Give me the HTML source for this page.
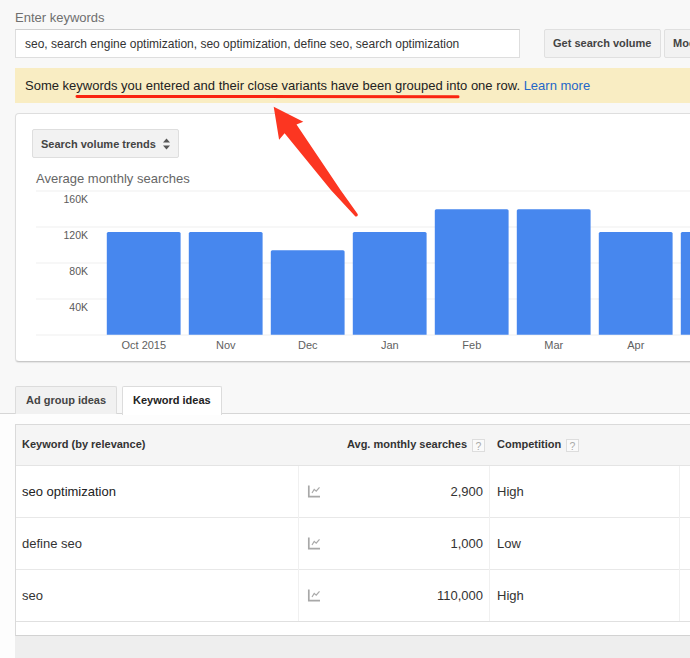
<!DOCTYPE html>
<html><head><meta charset="utf-8">
<style>
html,body{margin:0;padding:0;}
body{width:690px;height:658px;overflow:hidden;position:relative;background:#f8f8f8;font-family:"Liberation Sans",sans-serif;color:#333;}
.a{position:absolute;white-space:nowrap;}
.t{position:absolute;white-space:nowrap;line-height:20px;}
.b{font-weight:bold;}
</style></head><body>

<!-- Enter keywords -->
<div class="t" style="left:15px;top:7.5px;font-size:13px;color:#6f6f6f;">Enter keywords</div>
<div class="a" style="left:15px;top:29px;width:503px;height:27px;background:#fff;border:1px solid #dedede;border-top-color:#cfcfcf;"></div>
<div class="t" style="left:25px;top:33.5px;font-size:12px;color:#333;">seo, search engine optimization, seo optimization, define seo, search optimization</div>

<!-- buttons -->
<div class="a" style="left:544px;top:29px;width:115px;height:27px;background:#f2f2f2;border:1px solid #e0e0e0;border-radius:2px;"></div>
<div class="t b" style="left:553px;top:33px;font-size:11px;color:#444;">Get search volume</div>
<div class="a" style="left:664px;top:29px;width:60px;height:27px;background:#f2f2f2;border:1px solid #e0e0e0;border-radius:2px;"></div>
<div class="t b" style="left:673px;top:33px;font-size:11px;color:#444;">Modify</div>

<!-- banner -->
<div class="a" style="left:15px;top:68px;width:675px;height:35px;background:#f9edc3;"></div>
<div class="t" style="left:25px;top:76px;font-size:13px;color:#222;">Some keywords you entered and their close variants have been grouped into one row. <span style="color:#2466c8;">Learn more</span></div>

<!-- chart box -->
<div class="a" style="left:15px;top:113px;width:690px;height:247px;background:#fff;border:1px solid #dedede;border-bottom-color:#c8c8c8;border-radius:4px;box-shadow:0 1px 1px rgba(0,0,0,0.08);"></div>
<div class="a" style="left:32px;top:129px;width:145px;height:27px;background:#f2f2f2;border:1px solid #dedede;border-radius:2px;"></div>
<div class="t b" style="left:41px;top:133.5px;font-size:11px;color:#444;">Search volume trends</div>
<svg class="a" style="left:161px;top:137px;" width="12" height="14" viewBox="0 0 12 14"><path d="M2 5.5 L5.5 1.5 L9 5.5Z M2 8.5 L5.5 12.5 L9 8.5Z" fill="#555"/></svg>
<div class="t" style="left:36px;top:169px;font-size:13px;color:#666;">Average monthly searches</div>

<svg class="a" style="left:0;top:0;" width="690" height="658">
  <g stroke="#efefef" stroke-width="1">
    <line x1="36" y1="191" x2="690" y2="191"/>
    <line x1="36" y1="227" x2="690" y2="227"/>
    <line x1="36" y1="263" x2="690" y2="263"/>
    <line x1="36" y1="299" x2="690" y2="299"/>
    <line x1="36" y1="335" x2="690" y2="335"/>
  </g>
  <g font-family="Liberation Sans" font-size="10.5" fill="#5a5a5a" text-anchor="end">
    <text x="88" y="203">160K</text>
    <text x="88" y="239">120K</text>
    <text x="88" y="275">80K</text>
    <text x="88" y="311">40K</text>
  </g>
  <g fill="#4787ee"><path d="M106.8 334.8 V233.6 Q106.8 232 108.39999999999999 232 H179.0 Q180.6 232 180.6 233.6 V334.8 Z"/><path d="M188.8 334.8 V233.6 Q188.8 232 190.4 232 H261.0 Q262.6 232 262.6 233.6 V334.8 Z"/><path d="M270.8 334.8 V251.79999999999998 Q270.8 250.2 272.40000000000003 250.2 H343.0 Q344.6 250.2 344.6 251.79999999999998 V334.8 Z"/><path d="M352.8 334.8 V233.6 Q352.8 232 354.40000000000003 232 H425.0 Q426.6 232 426.6 233.6 V334.8 Z"/><path d="M434.8 334.8 V210.79999999999998 Q434.8 209.2 436.40000000000003 209.2 H507.0 Q508.6 209.2 508.6 210.79999999999998 V334.8 Z"/><path d="M516.8 334.8 V210.79999999999998 Q516.8 209.2 518.4 209.2 H588.9999999999999 Q590.5999999999999 209.2 590.5999999999999 210.79999999999998 V334.8 Z"/><path d="M598.8 334.8 V233.6 Q598.8 232 600.4 232 H670.9999999999999 Q672.5999999999999 232 672.5999999999999 233.6 V334.8 Z"/><path d="M680.8 334.8 V233.6 Q680.8 232 682.4 232 H752.9999999999999 Q754.5999999999999 232 754.5999999999999 233.6 V334.8 Z"/></g>
  <g font-family="Liberation Sans" font-size="11" fill="#5f5f5f" text-anchor="middle">
    <text x="143.8" y="349">Oct 2015</text>
    <text x="225.8" y="349">Nov</text>
    <text x="307.8" y="349">Dec</text>
    <text x="389.8" y="349">Jan</text>
    <text x="471.8" y="349">Feb</text>
    <text x="553.8" y="349">Mar</text>
    <text x="635.8" y="349">Apr</text>
  </g>
</svg>

<!-- tabs -->
<div class="a" style="left:0;top:413px;width:690px;height:245px;background:#fdfdfd;border-top:1px solid #d6d6d6;"></div>
<div class="a" style="left:15px;top:386px;width:100px;height:27px;background:#f1f1f1;border:1px solid #dcdcdc;border-bottom:none;border-radius:2px 2px 0 0;"></div>
<div class="t b" style="left:26px;top:390px;font-size:11px;color:#444;">Ad group ideas</div>
<div class="a" style="left:122px;top:386px;width:98px;height:28px;background:#fff;border:1px solid #dcdcdc;border-bottom:none;border-radius:2px 2px 0 0;"></div>
<div class="t b" style="left:133px;top:390px;font-size:11px;color:#222;">Keyword ideas</div>

<!-- table -->
<div class="a" style="left:15px;top:424px;width:690px;height:210px;background:#fff;border:1px solid #dadada;border-bottom-color:#d2d2d2;"></div>
<div class="a" style="left:16px;top:425px;width:690px;height:40px;background:#f5f5f5;border-bottom:1px solid #e4e4e4;"></div>
<div class="a" style="left:16px;top:517px;width:690px;height:0;border-top:1px solid #e8e8e8;"></div>
<div class="a" style="left:16px;top:569px;width:690px;height:0;border-top:1px solid #e8e8e8;"></div>
<div class="a" style="left:16px;top:621px;width:690px;height:0;border-top:1px solid #e0e0e0;"></div>
<div class="a" style="left:298px;top:466px;width:0;height:155px;border-left:1px solid #f0f0f0;"></div>
<div class="a" style="left:489px;top:466px;width:0;height:155px;border-left:1px solid #f0f0f0;"></div>
<div class="a" style="left:679px;top:466px;width:0;height:155px;border-left:1px solid #f0f0f0;"></div>
<div class="a" style="left:15px;top:636px;width:690px;height:23px;background:#eeeeee;"></div>

<div class="t b" style="left:22px;top:433.5px;font-size:11px;color:#333;">Keyword (by relevance)</div>
<div class="t b" style="left:347px;top:433.5px;font-size:11px;color:#333;">Avg. monthly searches</div>
<div class="a" style="left:472px;top:439px;width:11px;height:11px;border:1px solid #ddd;background:#fafafa;font-size:10.5px;line-height:12px;text-align:center;color:#aaa;">?</div>
<div class="t b" style="left:497px;top:433.5px;font-size:11px;color:#333;">Competition</div>
<div class="a" style="left:566px;top:439px;width:11px;height:11px;border:1px solid #ddd;background:#fafafa;font-size:10.5px;line-height:12px;text-align:center;color:#aaa;">?</div>

<div class="t" style="left:22px;top:482px;font-size:13px;color:#222;">seo optimization</div>
<div class="t" style="left:22px;top:534px;font-size:13px;color:#333;">define seo</div>
<div class="t" style="left:22px;top:586px;font-size:13px;color:#333;">seo</div>
<div class="t" style="right:207px;top:482px;font-size:13px;color:#333;">2,900</div>
<div class="t" style="right:207px;top:534px;font-size:13px;color:#333;">1,000</div>
<div class="t" style="right:207px;top:586px;font-size:13px;color:#333;">110,000</div>
<div class="t" style="left:497px;top:482px;font-size:13px;color:#333;">High</div>
<div class="t" style="left:497px;top:534px;font-size:13px;color:#333;">Low</div>
<div class="t" style="left:497px;top:586px;font-size:13px;color:#333;">High</div>

<svg class="a" style="left:0;top:0;" width="690" height="658">
  <g fill="none" stroke="#aaa" stroke-width="1.5">
    <path d="M308.8 485.5 V496.6 H320" stroke="#a8a8a8" stroke-width="1.7"/><path d="M312 493 L314.2 489.4 L316.2 491.2 L319.5 487.3" stroke-width="1.2"/>
    <path d="M308.8 537.5 V548.6 H320" stroke="#a8a8a8" stroke-width="1.7"/><path d="M312 545 L314.2 541.4 L316.2 543.2 L319.5 539.3" stroke-width="1.2"/>
    <path d="M308.8 589.5 V600.6 H320" stroke="#a8a8a8" stroke-width="1.7"/><path d="M312 597 L314.2 593.4 L316.2 595.2 L319.5 591.3" stroke-width="1.2"/>
  </g>
  <line x1="77" y1="96.5" x2="458" y2="96.7" stroke="#fa2410" stroke-width="3" stroke-linecap="round"/>
  <path d="M273.7 106.8 L303.3 121.7 L296.5 124.6 L340.5 190 L357.8 214.3 Q358 217.2 355.4 216.4 L330.9 190 L284.6 133.3 L279.1 139.7 Z" fill="#fc3621"/>
</svg>

</body></html>
